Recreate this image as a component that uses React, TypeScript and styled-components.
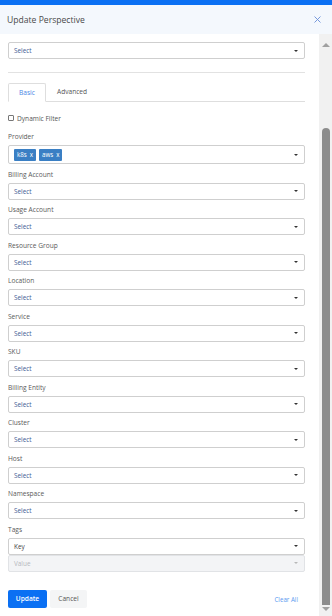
import React from "react";
import styled, { createGlobalStyle } from "styled-components";

const Global = createGlobalStyle`
  html, body { margin: 0; padding: 0; background: #fff; }
  body { font-family: "Open Sans", "Liberation Sans", sans-serif; }
  * { box-sizing: border-box; }
`;

const Page = styled.div`
  width: 332px;
  height: 616px;
  display: flex;
  flex-direction: column;
  overflow: hidden;
`;

const TopBar = styled.div`
  height: 5px;
  background: #0b70f3;
  flex: none;
`;

const Header = styled.div`
  height: 29px;
  background: #f4f8fd;
  display: flex;
  align-items: center;
  justify-content: space-between;
  padding: 0 11px 0 7px;
  flex: none;
`;

const Title = styled.div`
  font-size: 8.6px;
  color: #4a4a4a;
`;

const Body = styled.div`
  flex: 1;
  display: flex;
  min-height: 0;
`;

const Content = styled.div`
  width: 319px;
  padding: 8px 14px 0 8px;
  display: flex;
  flex-direction: column;
`;

const Scrollbar = styled.div`
  width: 13px;
  background: #f1f1f1;
  display: flex;
  flex-direction: column;
  align-items: center;
`;

const Arrow = styled.div<{ $down?: boolean }>`
  width: 0;
  height: 0;
  border-left: 4px solid transparent;
  border-right: 4px solid transparent;
  ${(p) =>
    p.$down
      ? "border-top: 4px solid #a0a0a0; margin-top: 2px;"
      : "border-bottom: 4px solid #a0a0a0; margin-top: 9px;"}
`;

const Thumb = styled.div`
  width: 8px;
  height: 477px;
  margin-top: 81px;
  background: #8c8c8c;
  border-radius: 4px 4px 0 0;
`;

const SelectBox = styled.div<{ $tall?: boolean; $disabled?: boolean }>`
  height: ${(p) => (p.$tall ? "19px" : "17px")};
  border: 1px solid ${(p) => (p.$disabled ? "#e1e3e6" : "#cfcfcf")};
  border-radius: 2px;
  background: ${(p) => (p.$disabled ? "#f3f4f6" : "#fff")};
  display: flex;
  align-items: center;
  padding: 0 6px 0 5px;
  font-size: 6.4px;
  color: ${(p) => (p.$disabled ? "#b5b8bd" : "#3c5a93")};
`;

const SelectText = styled.div<{ $plain?: boolean }>`
  flex: 1;
  display: flex;
  align-items: center;
  gap: 3px;
  ${(p) => (p.$plain ? "color: #444;" : "")}
`;

const Caret = styled.div<{ $light?: boolean }>`
  width: 0;
  height: 0;
  border-left: 2.5px solid transparent;
  border-right: 2.5px solid transparent;
  border-top: 2.5px solid ${(p) => (p.$light ? "#b8b8b8" : "#333")};
`;

const Divider = styled.div`
  height: 1px;
  background: #e2e2e2;
  margin-top: 13px;
`;

const Tabs = styled.div`
  margin-top: 10px;
  height: 19px;
  border-bottom: 1px solid #dedede;
  display: flex;
  align-items: flex-end;
`;

const Tab = styled.div<{ $active?: boolean }>`
  height: 19px;
  margin-bottom: ${(p) => (p.$active ? "-1px" : "0")};
  display: flex;
  align-items: center;
  justify-content: center;
  font-size: 6.6px;
  padding: 0 ${(p) => (p.$active ? "10px" : "11px")};
  width: ${(p) => (p.$active ? "38px" : "auto")};
  color: ${(p) => (p.$active ? "#4a86e6" : "#555")};
  background: ${(p) => (p.$active ? "#fff" : "transparent")};
  border: ${(p) => (p.$active ? "1px solid #dedede" : "none")};
  border-bottom-color: #fff;
  border-radius: 2px 2px 0 0;
`;

const CheckRow = styled.div`
  margin-top: 11px;
  display: flex;
  align-items: center;
  gap: 3px;
  font-size: 6.6px;
  color: #555;
  height: 10px;
`;

const CheckBox = styled.div`
  width: 6px;
  height: 6px;
  border: 1px solid #777;
  border-radius: 1px;
`;

const Field = styled.div<{ $first?: boolean }>`
  margin-top: ${(p) => (p.$first ? "9px" : "5.5px")};
  display: flex;
  flex-direction: column;
`;

const Label = styled.div`
  font-size: 6.6px;
  line-height: 9px;
  color: #5a5a5a;
  margin-bottom: 4px;
`;

const Chip = styled.div`
  height: 12px;
  padding: 0 3px 0 3px;
  background: #3a7fc4;
  color: #fff;
  font-size: 6.2px;
  display: flex;
  align-items: center;
  gap: 3px;
  border-radius: 1px;
`;

const Footer = styled.div`
  margin-top: 18px;
  display: flex;
  align-items: center;
  gap: 3px;
`;

const Button = styled.div<{ $primary?: boolean }>`
  height: 18px;
  width: ${(p) => (p.$primary ? "39px" : "37px")};
  border-radius: 2px;
  display: flex;
  align-items: center;
  justify-content: center;
  font-size: 6.6px;
  font-weight: ${(p) => (p.$primary ? 600 : 400)};
  color: ${(p) => (p.$primary ? "#fff" : "#555")};
  background: ${(p) => (p.$primary ? "#0b70f3" : "#f4f5f6")};
`;

const ClearAll = styled.div`
  margin-left: auto;
  margin-right: 7px;
  margin-top: 2px;
  font-size: 6.2px;
  color: #5a9af0;
`;

const Select = ({ text = "Select" }: { text?: string }) => (
  <SelectBox>
    <SelectText>{text}</SelectText>
    <Caret />
  </SelectBox>
);

const fields = [
  "Billing Account",
  "Usage Account",
  "Resource Group",
  "Location",
  "Service",
  "SKU",
  "Billing Entity",
  "Cluster",
  "Host",
  "Namespace",
];

export default function App() {
  return (
    <>
      <Global />
      <Page>
        <TopBar />
        <Header>
          <Title>Update Perspective</Title>
          <svg width="7" height="7" viewBox="0 0 7 7">
            <path d="M0.5 0.5 L6.5 6.5 M6.5 0.5 L0.5 6.5" stroke="#6a8fd8" strokeWidth="0.9" />
          </svg>
        </Header>
        <Body>
          <Content>
            <Select />
            <Divider />
            <Tabs>
              <Tab $active>Basic</Tab>
              <Tab>Advanced</Tab>
            </Tabs>
            <CheckRow>
              <CheckBox />
              Dynamic Filter
            </CheckRow>
            <Field $first>
              <Label>Provider</Label>
              <SelectBox $tall>
                <SelectText>
                  <Chip>k8s <span>x</span></Chip>
                  <Chip>aws <span>x</span></Chip>
                </SelectText>
                <Caret />
              </SelectBox>
            </Field>
            {fields.map((f) => (
              <Field key={f}>
                <Label>{f}</Label>
                <Select />
              </Field>
            ))}
            <Field>
              <Label>Tags</Label>
              <SelectBox>
                <SelectText $plain>Key</SelectText>
                <Caret />
              </SelectBox>
              <SelectBox $disabled>
                <SelectText>Value</SelectText>
                <Caret $light />
              </SelectBox>
            </Field>
            <Footer>
              <Button $primary>Update</Button>
              <Button>Cancel</Button>
              <ClearAll>Clear All</ClearAll>
            </Footer>
          </Content>
          <Scrollbar>
            <Arrow />
            <Thumb />
            <Arrow $down />
          </Scrollbar>
        </Body>
      </Page>
    </>
  );
}
